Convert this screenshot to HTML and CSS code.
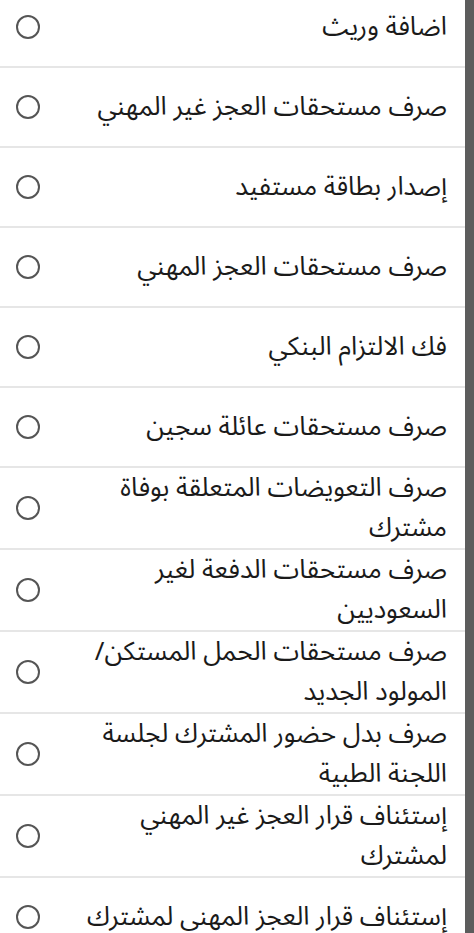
FILE: index.html
```html
<!DOCTYPE html>
<html lang="ar" dir="rtl">
<head>
<meta charset="utf-8">
<link rel="stylesheet" href="styles.css">
</head>
<body>
<div class="screen">
  <div class="panel">
    <ul class="list">
      <li class="row"><span class="label">اضافة وريث</span><span class="radio"></span></li>
      <li class="row"><span class="label">صرف مستحقات العجز غير المهني</span><span class="radio"></span></li>
      <li class="row"><span class="label">إصدار بطاقة مستفيد</span><span class="radio"></span></li>
      <li class="row"><span class="label">صرف مستحقات العجز المهني</span><span class="radio"></span></li>
      <li class="row"><span class="label">فك الالتزام البنكي</span><span class="radio"></span></li>
      <li class="row"><span class="label">صرف مستحقات عائلة سجين</span><span class="radio"></span></li>
      <li class="row"><span class="label">صرف التعويضات المتعلقة بوفاة مشترك</span><span class="radio"></span></li>
      <li class="row"><span class="label">صرف مستحقات الدفعة لغير السعوديين</span><span class="radio"></span></li>
      <li class="row"><span class="label">صرف مستحقات الحمل المستكن/ المولود الجديد</span><span class="radio"></span></li>
      <li class="row"><span class="label">صرف بدل حضور المشترك لجلسة اللجنة الطبية</span><span class="radio"></span></li>
      <li class="row"><span class="label">إستئناف قرار العجز غير المهني لمشترك</span><span class="radio"></span></li>
      <li class="row"><span class="label">إستئناف قرار العجز المهني لمشترك</span><span class="radio"></span></li>
    </ul>
  </div>
  <div class="backdrop"></div>
</div>
</body>
</html>
```

FILE: styles.css
```css
html, body {
  margin: 0;
  padding: 0;
  background: #5e5e5e;
}
body {
  font-family: "Noto Sans Arabic", "Noto Naskh Arabic", "DejaVu Sans", sans-serif;
  width: 474px;
  height: 933px;
  overflow: hidden;
}
.screen {
  display: flex;
  flex-direction: row;
  height: 933px;
  overflow: hidden;
  direction: ltr;
}
.panel {
  width: 465px;
  flex: none;
  background: #ffffff;
  height: 933px;
  overflow: hidden;
  direction: rtl;
}
.backdrop {
  flex: 1;
  background: #5c5c5c;
}
.list {
  list-style: none;
  margin: -12px 0 0 0;
  padding: 0;
}
.row {
  display: flex;
  align-items: center;
  min-height: 78px;
  border-bottom: 2px solid #e6e6e6;
  padding: 0 18px 0 0;
}
.label {
  flex: 1;
  font-size: 26px;
  line-height: 40px;
  color: #1a1a1a;
  text-align: right;
  padding-left: 29px;
}
.radio {
  width: 20px;
  height: 20px;
  border: 2.5px solid #555555;
  border-radius: 50%;
  margin-left: 16px;
  flex: none;
}
```
